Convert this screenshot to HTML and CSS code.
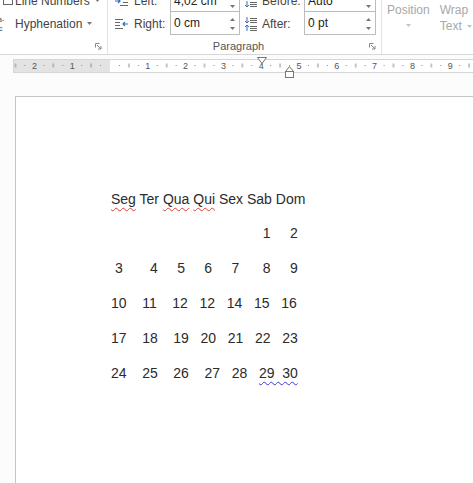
FILE: index.html
```html
<!DOCTYPE html>
<html lang="pt">
<head>
  <meta charset="UTF-8" />
  <title>Documento1 - Word</title>
  <link rel="stylesheet" href="styles.css">
</head>
<body>

<div class="ribbon">
  <div class="ribbon-inner">

    <div class="group group-page">
      <div class="row">
        <svg class="ico" width="14" height="14" viewBox="0 0 14 14"><rect x="3.5" y="1.5" width="9" height="9" fill="#fff" stroke="#666"/></svg>
        <span class="txt">Line Numbers</span>
        <svg class="caret" width="5" height="3" viewBox="0 0 5 3"><path d="M0 0H5L2.5 3Z" fill="#777"/></svg>
      </div>
      <div class="row">
        <svg class="ico" width="14" height="17" viewBox="0 0 14 17">
          <text x="-2" y="6.5" font-size="7" fill="#444" font-family="Liberation Sans">a-</text>
          <text x="-1" y="15.5" font-size="7" fill="#444" font-family="Liberation Sans">c</text>
        </svg>
        <span class="txt">Hyphenation</span>
        <svg class="caret" width="5" height="3" viewBox="0 0 5 3"><path d="M0 0H5L2.5 3Z" fill="#777"/></svg>
      </div>
      <div class="group-foot">
        <span class="group-name"></span>
        <svg class="launcher" width="7" height="7" viewBox="0 0 7 7"><path d="M0.5 4.5V0.5H4.5M2 2L6 6M6 3V6H3" fill="none" stroke="#888"/></svg>
      </div>
    </div>

    <div class="group group-para">
      <div class="cols">
        <div class="col col-indent">
          <div class="row">
            <svg class="ico" width="15" height="12" viewBox="0 0 15 12"><path d="M6 1.5H14M9 4.5H14M9 7.5H14M6 10.5H14" stroke="#666"/><path d="M1 6H6M4 4L6 6L4 8" fill="none" stroke="#2f6fc0" stroke-width="1.2"/></svg>
            <span class="label">Left:</span>
            <div class="field"><span class="val">4,02 cm</span><span class="spin"><svg width="5" height="16" viewBox="0 0 5 16"><path d="M0 6L2.5 3L5 6ZM0 12L2.5 15L5 12Z" fill="#777"/></svg></span></div>
          </div>
          <div class="row">
            <svg class="ico" width="15" height="12" viewBox="0 0 15 12"><path d="M1 1.5H9M1 4.5H6M1 7.5H6M1 10.5H9" stroke="#666"/><path d="M14 6H9M11 4L9 6L11 8" fill="none" stroke="#2f6fc0" stroke-width="1.2"/></svg>
            <span class="label">Right:</span>
            <div class="field"><span class="val">0 cm</span><span class="spin"><svg width="5" height="16" viewBox="0 0 5 16"><path d="M0 6L2.5 3L5 6ZM0 12L2.5 15L5 12Z" fill="#777"/></svg></span></div>
          </div>
        </div>
        <div class="col col-spacing">
          <div class="row">
            <svg class="ico" width="13" height="16" viewBox="0 0 13 16"><path d="M3 8V14M1 12L3 14L5 12" fill="none" stroke="#2f6fc0"/><path d="M6 9.5H13M6 11.5H13M6 13.5H13" stroke="#666"/></svg>
            <span class="label">Before:</span>
            <div class="field"><span class="val">Auto</span><span class="spin"><svg width="5" height="16" viewBox="0 0 5 16"><path d="M0 6L2.5 3L5 6ZM0 12L2.5 15L5 12Z" fill="#777"/></svg></span></div>
          </div>
          <div class="row">
            <svg class="ico" width="13" height="16" viewBox="0 0 13 16"><path d="M3 1V7M1 5L3 7L5 5M3 15V9M1 11L3 9L5 11" fill="none" stroke="#2f6fc0"/><path d="M6 2.5H13M6 4.5H13M6 6.5H13M6 10.5H13M6 12.5H13M6 14.5H13" stroke="#666"/></svg>
            <span class="label">After:</span>
            <div class="field"><span class="val">0 pt</span><span class="spin"><svg width="5" height="16" viewBox="0 0 5 16"><path d="M0 6L2.5 3L5 6ZM0 12L2.5 15L5 12Z" fill="#777"/></svg></span></div>
          </div>
        </div>
      </div>
      <div class="group-foot">
        <span class="group-name">Paragraph</span>
        <svg class="launcher" width="7" height="7" viewBox="0 0 7 7"><path d="M0.5 4.5V0.5H4.5M2 2L6 6M6 3V6H3" fill="none" stroke="#888"/></svg>
      </div>
    </div>

    <div class="group group-arrange">
      <div class="big-btn">
        <span>Position</span>
        <svg class="caret-lg" width="5" height="3" viewBox="0 0 5 3"><path d="M0 0H5L2.5 3Z" fill="#c4c4c4"/></svg>
      </div>
      <div class="big-btn wrap-btn">
        <span>Wrap</span>
        <span>Text <svg width="5" height="3" viewBox="0 0 5 3"><path d="M0 0H5L2.5 3Z" fill="#c4c4c4"/></svg></span>
      </div>
    </div>

  </div>
</div>

<svg class="ruler" width="473" height="26" viewBox="0 0 473 26">
  <defs>
    <pattern id="ticks" patternUnits="userSpaceOnUse" x="110" y="0" width="37.8" height="26">
      <rect x="9" y="10" width="1" height="1" fill="#8a8a8a"/>
      <rect x="18.4" y="8.5" width="1" height="4" fill="#8a8a8a"/>
      <rect x="27.9" y="10" width="1" height="1" fill="#8a8a8a"/>
    </pattern>
  </defs>
  <rect x="13.5" y="4.5" width="470" height="13" fill="#fff" stroke="#d6d6d6"/>
  <rect x="14" y="5" width="96" height="12" fill="#e3e3e3"/>
  <rect x="14" y="5" width="459" height="12" fill="url(#ticks)"/>
  <g font-family="Liberation Sans, sans-serif" font-size="9" fill="#555" text-anchor="middle">
    <text x="34.4" y="14">2</text>
    <text x="72.2" y="14">1</text>
    <text x="147.8" y="14">1</text>
    <text x="185.6" y="14">2</text>
    <text x="223.4" y="14">3</text>
    <text x="261.2" y="14">4</text>
    <text x="299" y="14">5</text>
    <text x="336.8" y="14">6</text>
    <text x="374.6" y="14">7</text>
    <text x="412.4" y="14">8</text>
    <text x="450.2" y="14">9</text>
  </g>
  <!-- indent markers -->
  <path d="M257.5 2.5H266.5L262 8.5Z" fill="#fff" stroke="#777"/>
  <path d="M285.5 16.5L289.5 11.5L293.5 16.5Z" fill="#fff" stroke="#777"/>
  <rect x="285.5" y="16.5" width="8" height="6" fill="#fff" stroke="#777"/>
</svg>

<div class="doc">
  <div class="page">
    <div class="cal">
      <div class="line head"><span class="sp">Seg</span> Ter <span class="sp">Qua</span> <span class="sp">Qui</span> Sex Sab Dom</div>
      <div class="line">                                       1     2</div>
      <div class="line"> 3       4     5     6     7      8     9</div>
      <div class="line">10    11    12   12   14   15   16</div>
      <div class="line">17    18    19   20   21   22   23</div>
      <div class="line">24    25    26    27   28   <span class="gr">29  30</span></div>
    </div>
  </div>
</div>

</body>
</html>
```

FILE: styles.css
```css
body {
  margin: 0;
  width: 473px;
  height: 483px;
  overflow: hidden;
  background-color: #fcfcfd;
  font-family: "Liberation Sans", Arial, sans-serif;
}

/* ribbon */
.ribbon {
  height: 54px;
  background: #fff;
  border-bottom: 1px solid #d8d8d8;
  overflow: hidden;
}
.ribbon-inner {
  display: flex;
  margin-top: -11px;
  font-size: 12px;
  color: #444;
}
.group {
  display: flex;
  flex-direction: column;
  border-right: 1px solid #e2e2e2;
}
.group-page {
  width: 107px;
}
.group-para {
  width: 273px;
}
.row {
  height: 23px;
  display: flex;
  align-items: center;
  white-space: nowrap;
}
.ico {
  flex: none;
  display: block;
}
.txt {
  margin-left: 1px;
}
.caret {
  margin-left: 5px;
}
.group-foot {
  display: flex;
  align-items: center;
  height: 18px;
  padding-top: 2px;
}
.group-name {
  flex: 1;
  text-align: center;
  font-size: 11px;
  color: #555;
}
.launcher {
  margin-right: 5px;
}

.cols {
  display: flex;
  gap: 4px;
  padding-left: 6px;
}
.col {
  display: flex;
  flex-direction: column;
}
.label {
  margin-left: 5px;
}
.col-indent .label {
  width: 36px;
}
.col-spacing .label {
  width: 42px;
}
.field {
  box-sizing: border-box;
  height: 23px;
  border: 1px solid #bcbcbc;
  background: #fff;
  display: flex;
  align-items: center;
  padding-left: 3px;
  color: #222;
}
.col-indent .field {
  width: 70px;
}
.col-spacing .field {
  width: 72px;
}
.row + .row .field {
  border-top: 0;
}
.field .val {
  flex: 1;
}
.spin {
  width: 14px;
  display: flex;
  justify-content: center;
}
.spin svg {
  display: block;
}

.group-arrange {
  flex-direction: row;
  gap: 10px;
  padding-left: 5px;
  border-right: 0;
  color: #a8a8a8;
}
.big-btn {
  display: flex;
  flex-direction: column;
  align-items: center;
  padding-top: 13px;
  line-height: 16px;
}
.caret-lg {
  margin-top: 6px;
}
.wrap-btn {
  align-items: flex-start;
}
.wrap-btn svg {
  margin-left: 2px;
  vertical-align: middle;
}

/* ruler */
.ruler {
  display: block;
}

/* document */
.doc {
  padding: 15px 0 0 15px;
}
.page {
  box-sizing: border-box;
  height: 387px;
  background: #fff;
  border-left: 1px solid #c6c6c6;
  border-top: 1px solid #c6c6c6;
  padding: 86px 0 0 95px;
}
.cal {
  font-size: 14px;
  color: #2b2b2b;
}
.line {
  white-space: pre;
  line-height: 35px;
}
.line.head {
  line-height: 33px;
}
.sp {
  text-decoration: underline wavy #e0413a;
  text-decoration-thickness: 1px;
  text-underline-offset: 3px;
}
.gr {
  text-decoration: underline wavy #3a3ad6;
  text-decoration-thickness: 1px;
  text-underline-offset: 3px;
}
```
